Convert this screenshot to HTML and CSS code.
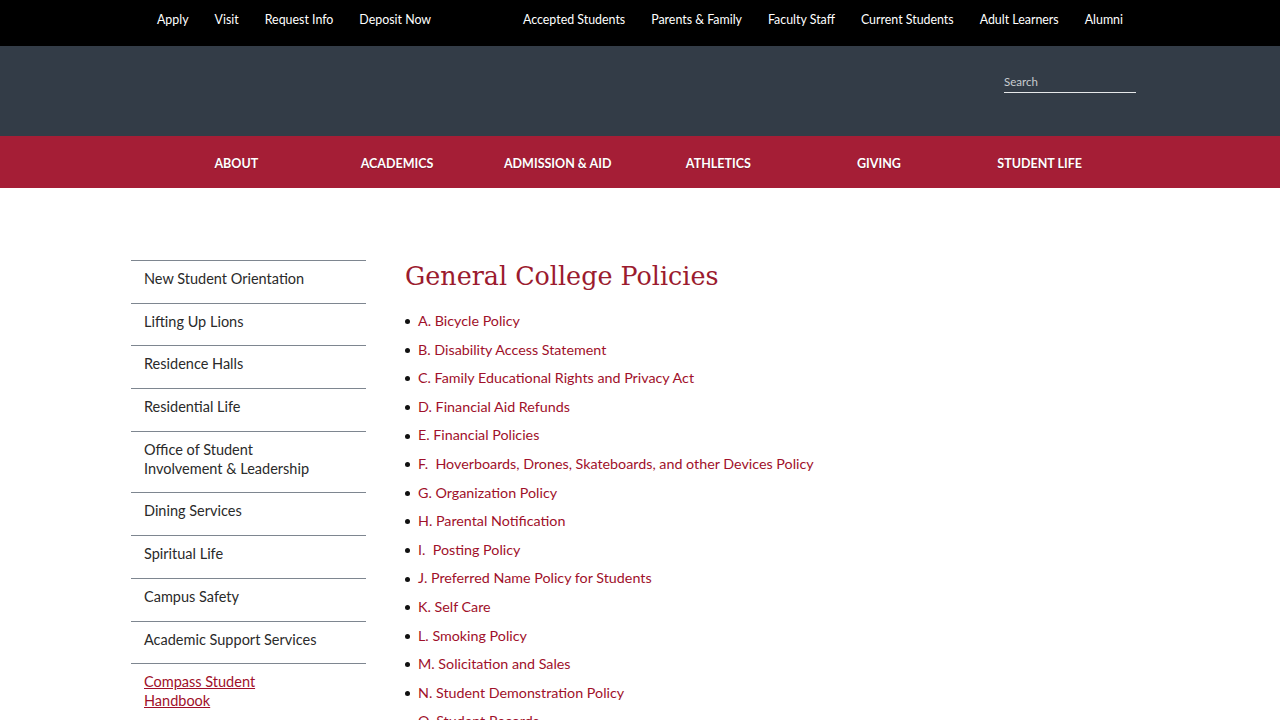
FILE: index.html
```html
<!DOCTYPE html>
<html>
<head>
<meta charset="utf-8">
<link rel="stylesheet" href="styles.css">
</head>
<body>
<div class="topbar">
  <div class="topbar-inner">
    <nav class="top-left">
      <a>Apply</a><a>Visit</a><a>Request Info</a><a>Deposit Now</a>
    </nav>
    <nav class="top-right">
      <a>Accepted Students</a><a>Parents &amp; Family</a><a>Faculty Staff</a><a>Current Students</a><a>Adult Learners</a><a>Alumni</a>
    </nav>
  </div>
</div>
<header class="masthead">
  <div class="masthead-inner">
    <div class="search">Search</div>
  </div>
</header>
<nav class="mainnav">
  <div class="mainnav-inner">
    <a>ABOUT</a><a>ACADEMICS</a><a>ADMISSION &amp; AID</a><a>ATHLETICS</a><a>GIVING</a><a>STUDENT LIFE</a>
  </div>
</nav>
<main class="page">
  <aside class="sidebar">
    <ul>
      <li><a>New Student Orientation</a></li>
      <li><a>Lifting Up Lions</a></li>
      <li><a>Residence Halls</a></li>
      <li><a>Residential Life</a></li>
      <li><a>Office of Student<br>Involvement &amp; Leadership</a></li>
      <li><a>Dining Services</a></li>
      <li><a>Spiritual Life</a></li>
      <li><a>Campus Safety</a></li>
      <li><a>Academic Support Services</a></li>
      <li class="active"><a>Compass Student<br>Handbook</a></li>
    </ul>
  </aside>
  <section class="content">
    <h1>General College Policies</h1>
    <ul class="policies">
      <li><a>A. Bicycle Policy</a></li>
      <li><a>B. Disability Access Statement</a></li>
      <li><a>C. Family Educational Rights and Privacy Act</a></li>
      <li><a>D. Financial Aid Refunds</a></li>
      <li><a>E. Financial Policies</a></li>
      <li><a>F.&nbsp; Hoverboards, Drones, Skateboards, and other Devices Policy</a></li>
      <li><a>G. Organization Policy</a></li>
      <li><a>H. Parental Notification</a></li>
      <li><a>I.&nbsp; Posting Policy</a></li>
      <li><a>J. Preferred Name Policy for Students</a></li>
      <li><a>K. Self Care</a></li>
      <li><a>L. Smoking Policy</a></li>
      <li><a>M. Solicitation and Sales</a></li>
      <li><a>N. Student Demonstration Policy</a></li>
      <li><a>O. Student Records</a></li>
    </ul>
  </section>
</main>
</body>
</html>
```
FILE: styles.css
```css
* { box-sizing: border-box; }
html, body { margin: 0; padding: 0; }
body {
  font-family: "Lato", "Noto Sans", sans-serif;
  background: #fff;
  overflow: hidden;
}
a { text-decoration: none; color: inherit; }

.topbar {
  background: #000;
  height: 46px;
}
.topbar-inner {
  width: 966px;
  margin-left: 157px;
  height: 46px;
  display: flex;
  justify-content: space-between;
  align-items: center;
  padding-bottom: 8px;
}
.top-left, .top-right { display: flex; gap: 26px; }
.topbar a { color: #fff; font-size: 12.4px; }

.masthead {
  background: #333c47;
  height: 90px;
}
.masthead-inner {
  width: 1136px;
  display: flex;
  justify-content: flex-end;
  padding-top: 29px;
}
.search {
  width: 132px;
  color: #c9ccd0;
  font-size: 11.5px;
  padding-bottom: 4px;
  border-bottom: 1.5px solid #e6e8ea;
}

.mainnav {
  background: #a51e36;
  height: 52px;
}
.mainnav-inner {
  margin-left: 156px;
  width: 964px;
  height: 52px;
  display: grid;
  grid-template-columns: repeat(6, 1fr);
  align-items: center;
  padding-top: 2px;
}
.mainnav a {
  text-align: center;
  color: #fff;
  font-weight: 700;
  font-size: 12.5px;
  text-shadow: 0 1px 1px rgba(0,0,0,0.25);
}

.page {
  display: flex;
  gap: 39px;
  margin-left: 131px;
  padding-top: 72px;
}
.sidebar { width: 235px; flex: none; }
.sidebar ul { list-style: none; margin: 0; padding: 0; }
.sidebar li {
  border-top: 1px solid #7e8690;
  padding: 8px 13px 14.7px;
  font-size: 14.5px;
  line-height: 19px;
  color: #2a2a2a;
}
.sidebar li.active a { color: #a0102a; text-decoration: underline; }

.content { flex: 1; }
.content h1 {
  font-family: "DejaVu Serif", "Liberation Serif", serif;
  font-weight: 400;
  color: #9b1b2e;
  font-size: 25.4px;
  margin: 0;
  line-height: 32px;
}
.policies {
  list-style: none;
  margin: 15px 0 0;
  padding: 0;
}
.policies li {
  display: flex;
  align-items: center;
  gap: 8px;
  font-size: 14.3px;
  line-height: 28.6px;
  height: 28.6px;
}
.policies li::before {
  content: "";
  width: 5px;
  height: 5px;
  border-radius: 50%;
  background: #111;
  flex: none;
  margin-top: 1px;
}
.policies a { color: #a0102a; }
```
